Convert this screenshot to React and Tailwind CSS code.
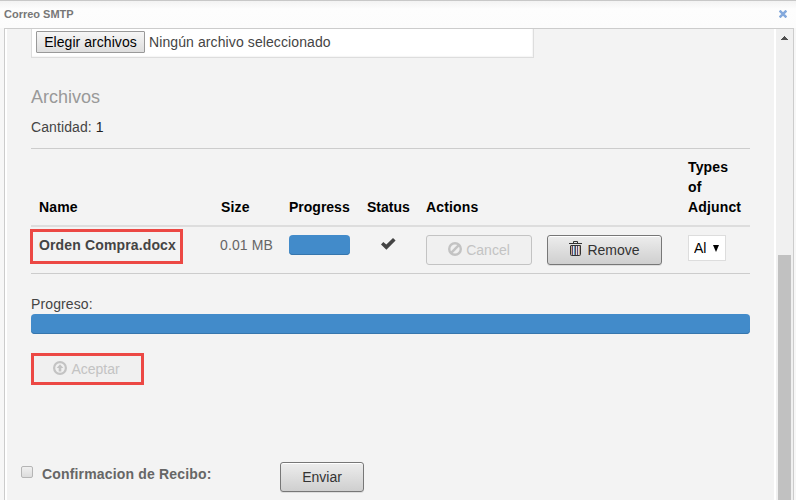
const COLS = 'grid grid-cols-[181px_69px_78px_59px_262px_1fr] pl-2';

function CheckIcon() {
  return (
    <svg className="mt-[3px] ml-[14px] block" width="15" height="12" viewBox="0 0 15 12">
      <path d="M0 6.4 2.3 4 5.3 6.6 12 0 14.6 2.4 5.4 11.7Z" fill="#444" />
    </svg>
  );
}

function BanIcon() {
  return (
    <svg className="mr-[4px] mb-[2px] block" width="14" height="14" viewBox="0 0 14 14" fill="none" stroke="#c3c3c3">
      <circle cx="7" cy="7" r="5.8" strokeWidth="2.4" />
      <path d="M3.2 10.8 10.8 3.2" strokeWidth="2.4" />
    </svg>
  );
}

function UploadIcon() {
  return (
    <svg className="mr-[4px] mb-[2px] block" width="14" height="14" viewBox="0 0 14 14">
      <circle cx="7" cy="7" r="5.9" fill="none" stroke="#c3c3c3" strokeWidth="2.2" />
      <path d="M7 3.2 10.4 7H8.3V10.6H5.7V7H3.6Z" fill="#c3c3c3" />
    </svg>
  );
}

function TrashIcon() {
  return (
    <svg className="mr-[5px] mb-[3px] block" width="13" height="15" viewBox="0 0 13 15" fill="none" stroke="#333">
      <path d="M4.5 2V.5H8.5V2M0 2.5H13" />
      <path d="M1.5 5V13.5Q1.5 14.5 2.5 14.5H10.5Q11.5 14.5 11.5 13.5V4.5H1.5" />
      <path d="M2.5 5V14M10.5 5V14" stroke="#c9a98c" />
      <path d="M3.5 5V14M8.5 5V14" stroke="#5a4a78" />
      <path d="M5.5 5V14" stroke="#5b9bc0" />
      <path d="M6.5 5V14" stroke="#6b4a4a" />
    </svg>
  );
}

const raised =
  'flex items-center justify-center rounded-[3px] border border-[#777] bg-linear-to-b from-[#ededed] to-[#cfcfcf] text-[#333] shadow-[inset_0_1px_0_#fff,0_1px_0_#ddd]';

export default function App() {
  return (
    <div className="flex h-[500px] w-[796px] flex-col overflow-hidden border-t border-[#c8c8c8] bg-[#f7f7f7] font-['Liberation_Sans',Arial,sans-serif] text-[14px] leading-[20px] text-[#444]">
      <header className="flex h-[27px] shrink-0 items-center justify-between bg-linear-to-b from-[#f3f3f3] via-[#fdfdfd] via-30% to-[#fcfcfc] pr-[9px] pb-[1px] pl-[4px] text-[11px] font-bold text-[#777]">
        <span className="whitespace-nowrap">Correo SMTP</span>
        <svg width="8" height="8" viewBox="0 0 8 8" stroke="#84a9dc" strokeWidth="2.5">
          <path d="M.6.6 7.4 7.4M7.4.6.6 7.4" />
        </svg>
      </header>
      <div className="mr-[2px] ml-[4px] flex h-[472px] border border-b-0 border-[#ccc]">
        <main className="flex w-[771px] shrink-0 flex-col border-x-2 border-white bg-[#f3f3f3] pl-[24px]">
          <div className="flex h-[29px] w-[503px] shrink-0 border border-t-0 border-[#ddd] bg-white pt-[2px] pl-[4px] shadow-[inset_-1px_-1px_1px_#f5f5f5]">
            <button className="h-[22px] w-[109px] rounded-[1px] border border-[#999] bg-linear-to-b from-[#f6f6f6] to-[#dedede] text-[14px] leading-[20px] tracking-[0.05px] whitespace-nowrap text-black">Elegir archivos</button>
            <span className="ml-[4px] leading-[22px] tracking-[0.1px] whitespace-nowrap">Ningún archivo seleccionado</span>
          </div>
          <h2 className="mt-[29px] h-[20px] text-[18px] leading-[20px] text-[#999]">Archivos</h2>
          <p className="mt-[10px] h-[20px] tracking-[0.1px]">Cantidad: <span className="text-[#222]">1</span></p>
          <section className="mt-[11px] w-[719px] shrink-0 border-y border-[#ccc]">
            <div className={`${COLS} h-[78px] items-end border-b-2 border-[#ddd] pb-[8px] font-bold tracking-[0.15px] text-black`}>
              <span>Name</span>
              <span className="pl-[1px]">Size</span>
              <span className="tracking-normal">Progress</span>
              <span className="tracking-normal">Status</span>
              <span>Actions</span>
              <span>Types<br />of<br />Adjunct</span>
            </div>
            <div className={`${COLS} h-[46px] items-start`}>
              <strong className="-ml-[9px] mt-[2px] h-[35px] w-[153px] border-[3px] border-[#ec4844] pt-[3px] pl-[6px] tracking-[0.14px] whitespace-nowrap">Orden Compra.docx</strong>
              <span className="mt-[8px] tracking-[0.12px] text-[#666]">0.01 MB</span>
              <div className="mt-[8px] h-[20px] w-[61px] rounded-[4px] bg-[#428bca] shadow-[inset_0_-1px_0_#3676ad]" />
              <div className="mt-[8px]"><CheckIcon /></div>
              <div className="mt-[8px] flex">
                <button className="flex h-[30px] w-[106px] items-center justify-center rounded-[3px] border border-[#c3c3c3] bg-[#f0f0f0] text-[#c3c3c3]"><BanIcon />Cancel</button>
                <button className={`${raised} ml-[15px] h-[30px] w-[115px]`}><TrashIcon />Remove</button>
              </div>
              <div className="mt-[8px] flex h-[26px] w-[38px] items-center border border-[#ddd] bg-white pl-[5px] text-black">
                <span className="w-[12px] overflow-hidden">Al</span>
                <svg className="ml-[7px]" width="6" height="7" viewBox="0 0 6 7"><path d="M0 0H6L3 7Z" /></svg>
              </div>
            </div>
          </section>
          <p className="mt-[20px] h-[20px] tracking-[0.12px]">Progreso:</p>
          <div className="h-[20px] w-[719px] shrink-0 rounded-[4px] bg-[#428bca] shadow-[inset_0_-1px_0_#3676ad]" />
          <button className="mt-[19px] flex h-[32px] w-[113px] shrink-0 items-center justify-center border-[3px] border-[#ec4844] bg-[#f0f0f0] pr-[2px] text-[#c3c3c3]"><UploadIcon />Aceptar</button>
          <div className="-ml-[10px] mt-[77px] flex h-[30px] shrink-0">
            <div className="mt-[4px] h-[12px] w-[12px] rounded-[2px] border border-[#b5b5b5] bg-linear-to-b from-[#f0f0f0] to-[#dcdcdc]" />
            <label className="mt-[2px] ml-[9px] w-[238px] font-bold tracking-[0.17px] whitespace-nowrap text-[#666]">Confirmacion de Recibo:</label>
            <button className={`${raised} h-[30px] w-[84px]`}>Enviar</button>
          </div>
        </main>
        <aside className="flex w-[17px] shrink-0 flex-col items-center bg-[#f0f0f0]">
          <svg className="mt-[7px] shrink-0" width="7" height="4" viewBox="0 0 7 4" fill="#505050"><path d="M3 0H4V1H5V2H6V3H7V4H0V3H1V2H2V1H3Z" /></svg>
          <div className="mt-[215px] w-[13px] flex-1 bg-[#c1c1c1]" />
        </aside>
      </div>
    </div>
  );
}
